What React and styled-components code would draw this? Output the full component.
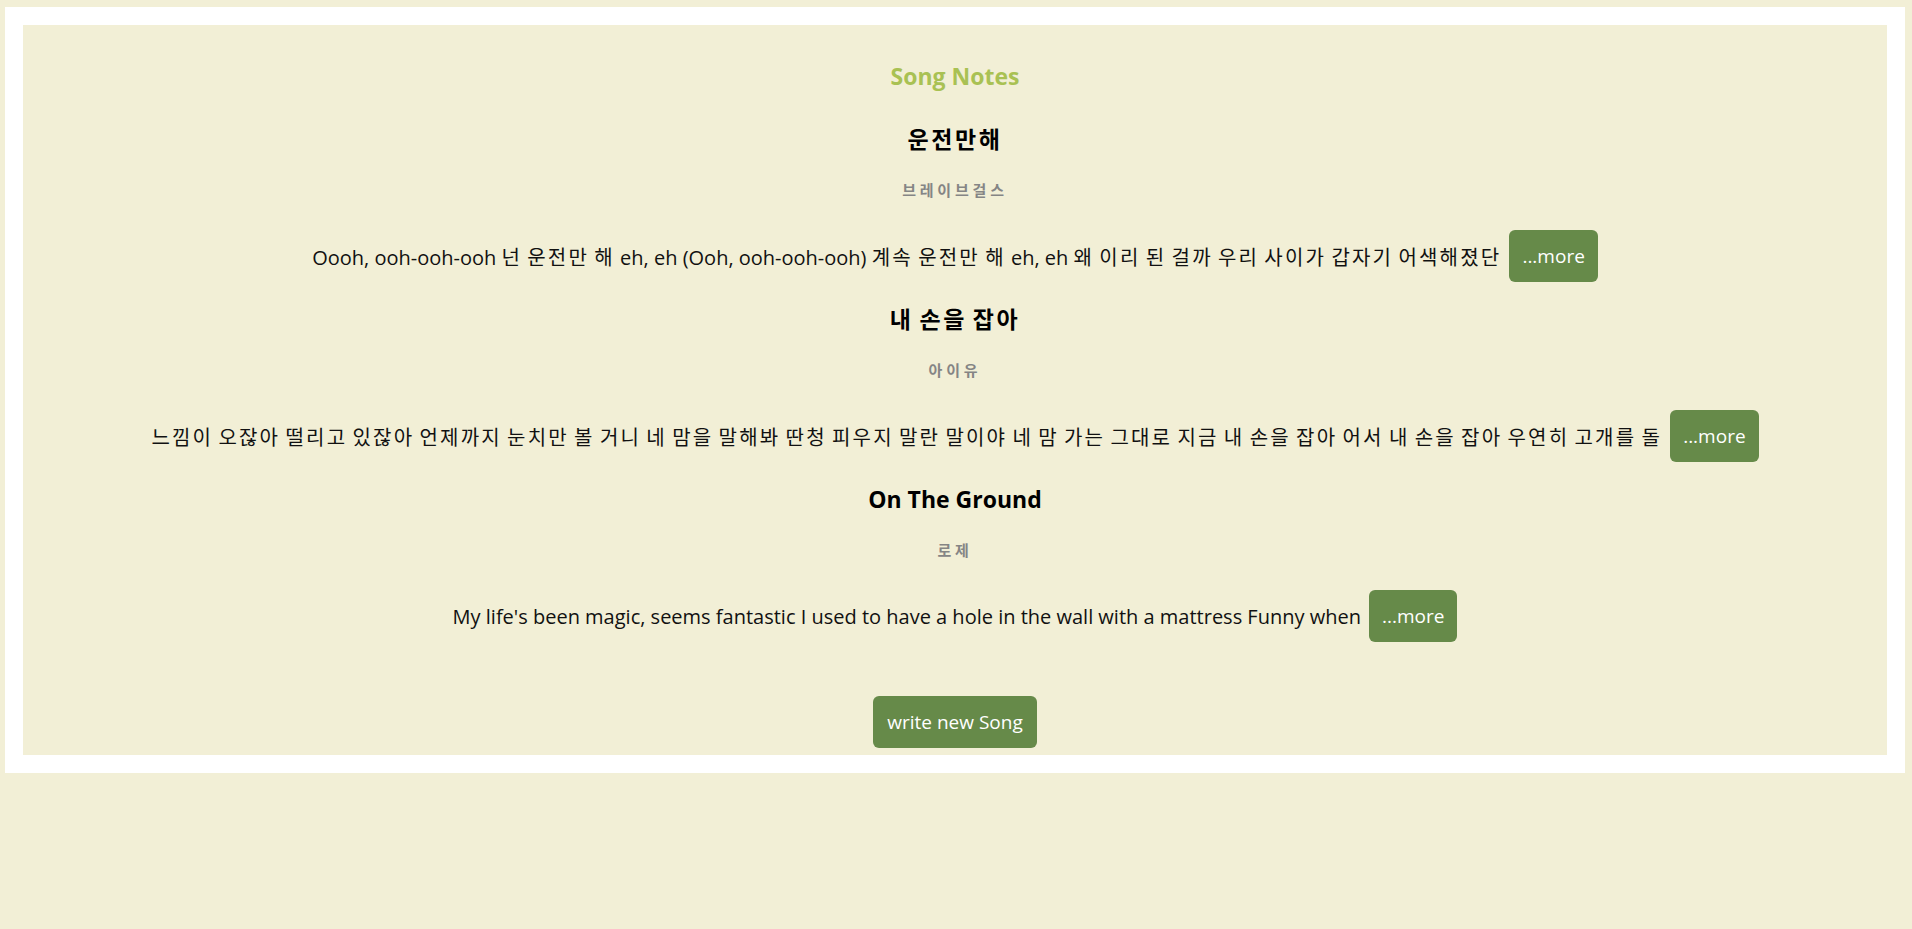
import styled, { createGlobalStyle } from 'styled-components'

const GlobalStyle = createGlobalStyle`
  body {
    margin: 0;
    background: #f2efd6;
    font-family: 'Open Sans', 'Noto Sans CJK KR', sans-serif;
  }
`

const songs = [
  {
    id: 1,
    title: '운전만해',
    singer: '브레이브걸스',
    lyrics:
      'Oooh, ooh-ooh-ooh 넌 운전만 해 eh, eh (Ooh, ooh-ooh-ooh) 계속 운전만 해 eh, eh 왜 이리 된 걸까 우리 사이가 갑자기 어색해졌단',
  },
  {
    id: 2,
    title: '내 손을 잡아',
    singer: '아이유',
    lyrics:
      '느낌이 오잖아 떨리고 있잖아 언제까지 눈치만 볼 거니 네 맘을 말해봐 딴청 피우지 말란 말이야 네 맘 가는 그대로 지금 내 손을 잡아 어서 내 손을 잡아 우연히 고개를 돌',
  },
  {
    id: 3,
    title: 'On The Ground',
    singer: '로제',
    lyrics:
      "My life's been magic, seems fantastic I used to have a hole in the wall with a mattress Funny when",
  },
]

// 한글 부분만 자간을 넓혀서 원본 폰트 폭에 맞춤
const Hangul = styled.span`
  letter-spacing: 0.11em;
`

const withHangul = (text) =>
  text.split(/([가-힣]+)/).map((part, i) => (/[가-힣]/.test(part) ? <Hangul key={i}>{part}</Hangul> : part))

const Frame = styled.div`
  margin: 7px 7px 0 5px;
  padding: 18px;
  background: #ffffff;
`

const Board = styled.div`
  display: flex;
  flex-direction: column;
  align-items: center;
  padding: 35px 0 7px;
  background: #f2efd6;
  text-align: center;
`

const Heading = styled.h1`
  margin: 0 0 31px;
  font-size: 23px;
  line-height: 32px;
  font-weight: 700;
  color: #a9c153;
`

const SongList = styled.ul`
  list-style: none;
  margin: 0;
  padding: 0;
  display: flex;
  flex-direction: column;
  align-items: center;
  gap: 21px;
`

const SongItem = styled.li`
  display: flex;
  flex-direction: column;
  align-items: center;
`

const SongTitle = styled.h2`
  margin: 0 0 25px;
  font-size: 23px;
  line-height: 32px;
  font-weight: 700;
  color: #000;
`

const Singer = styled.h5`
  margin: 0 0 30px;
  font-family: 'Noto Sans CJK KR', sans-serif;
  font-size: 15px;
  line-height: 20px;
  font-weight: 700;
  letter-spacing: 3.8px;
  color: #858585;
`

const LyricRow = styled.div`
  display: flex;
  align-items: center;
  justify-content: center;
  gap: 8px;
  font-size: 20px;
  color: #111;
`

const Button = styled.button`
  height: 52px;
  padding: 0 ${(props) => (props.$wide ? '14px' : '13px')};
  border: none;
  border-radius: 6px;
  background: #668a49;
  color: #fff;
  font-family: 'Open Sans', 'Noto Sans CJK KR', sans-serif;
  font-size: 19px;
  cursor: pointer;
`

const Footer = styled.div`
  margin-top: 54px;
`

const App = () => {
  return (
    <>
      <GlobalStyle />
      <Frame>
        <Board>
          <Heading>Song Notes</Heading>
          <SongList>
            {songs.map((song) => (
              <SongItem key={song.id}>
                <SongTitle>{withHangul(song.title)}</SongTitle>
                <Singer>{song.singer}</Singer>
                <LyricRow>
                  <span>{withHangul(song.lyrics)}</span>
                  <Button>...more</Button>
                </LyricRow>
              </SongItem>
            ))}
          </SongList>
          <Footer>
            <Button $wide>write new Song</Button>
          </Footer>
        </Board>
      </Frame>
    </>
  )
}

export default App
